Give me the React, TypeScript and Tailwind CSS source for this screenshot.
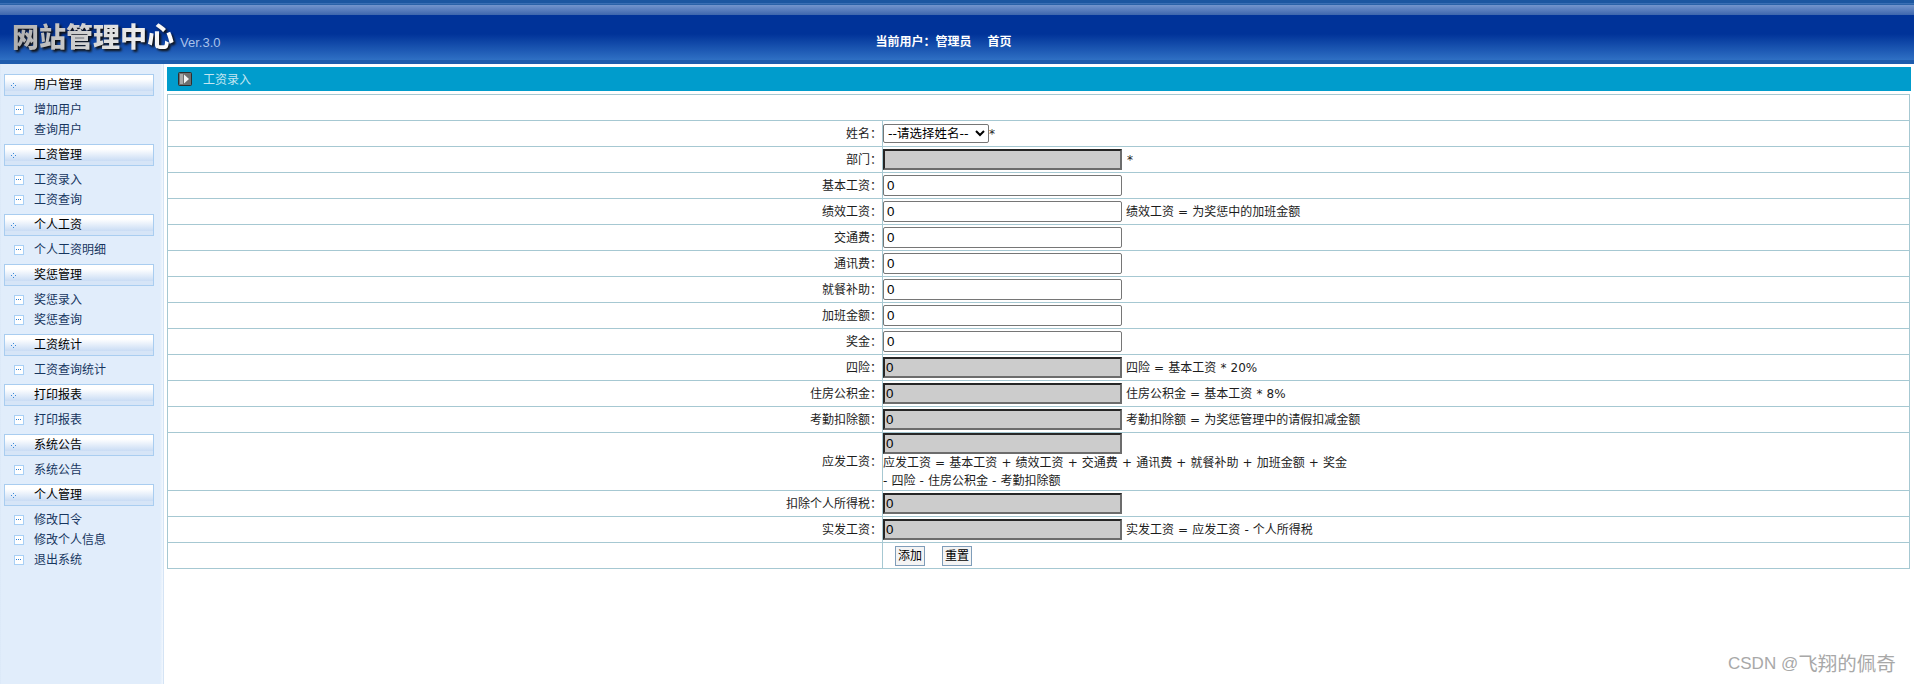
import React from "react";

const menu = [
  { title: "用户管理", items: ["增加用户", "查询用户"] },
  { title: "工资管理", items: ["工资录入", "工资查询"] },
  { title: "个人工资", items: ["个人工资明细"] },
  { title: "奖惩管理", items: ["奖惩录入", "奖惩查询"] },
  { title: "工资统计", items: ["工资查询统计"] },
  { title: "打印报表", items: ["打印报表"] },
  { title: "系统公告", items: ["系统公告"] },
  { title: "个人管理", items: ["修改口令", "修改个人信息", "退出系统"] },
];

type Row = { label: string; ro?: boolean; value?: string; help?: string };

const rows: Row[] = [
  { label: "基本工资：" },
  { label: "绩效工资：", help: "绩效工资 = 为奖惩中的加班金额" },
  { label: "交通费：" },
  { label: "通讯费：" },
  { label: "就餐补助：" },
  { label: "加班金额：" },
  { label: "奖金：" },
  { label: "四险：", ro: true, help: "四险 = 基本工资 * 20%" },
  { label: "住房公积金：", ro: true, help: "住房公积金 = 基本工资 * 8%" },
  { label: "考勤扣除额：", ro: true, help: "考勤扣除额 = 为奖惩管理中的请假扣减金额" },
];

function Field({ ro, value = "0" }: { ro?: boolean; value?: string }) {
  if (ro) {
    return (
      <input
        readOnly
        defaultValue={value}
        className="block w-[239px] h-[21px] shrink-0 border-2 border-t-[#262626] border-l-[#262626] border-b-[#6c6c6c] border-r-[#6c6c6c] bg-[#cccccc] px-px text-[13.33px] text-black [font-family:'Liberation_Sans',sans-serif]"
      />
    );
  }
  return (
    <input
      defaultValue={value}
      className="block w-[239px] h-[21px] shrink-0 rounded-[2px] border border-[#767676] bg-white px-[3px] text-[13.33px] text-black [font-family:'Liberation_Sans',sans-serif]"
    />
  );
}

function Label({ children }: { children?: React.ReactNode }) {
  return <td className="h-[26px] w-[715px] border border-[#a6c8d2] p-0 text-right align-middle">{children}</td>;
}

function Value({ children }: { children?: React.ReactNode }) {
  return <td className="h-[26px] border border-[#a6c8d2] p-0 align-middle [word-spacing:0.3px]">{children}</td>;
}

function ItemIcon() {
  return (
    <svg width="10" height="10" viewBox="0 0 10 10" className="shrink-0">
      <rect x="0.5" y="0.5" width="9" height="9" fill="#ffffff" stroke="#a9d0f5" />
      <rect x="2" y="4" width="1" height="1" fill="#2b7fd8" />
      <rect x="4" y="4" width="1" height="1" fill="#2b7fd8" />
      <rect x="6" y="4" width="1" height="1" fill="#2b7fd8" />
    </svg>
  );
}

function HeadIcon() {
  return (
    <svg width="5" height="5" viewBox="0 0 5 5" className="shrink-0">
      <rect x="2" y="0" width="1" height="1" fill="#3a8ad8" />
      <rect x="0" y="2" width="1" height="1" fill="#3a8ad8" />
      <rect x="4" y="2" width="1" height="1" fill="#3a8ad8" />
      <rect x="2" y="4" width="1" height="1" fill="#3a8ad8" />
    </svg>
  );
}

export default function App() {
  return (
    <div className="relative h-[684px] w-[1914px] overflow-hidden bg-white text-[12px] text-[#1c1c1c] [font-family:'DejaVu_Sans','Noto_Sans_CJK_SC',sans-serif]">
      <header className="flex h-[64px] items-start bg-[linear-gradient(to_bottom,#1c57a1_0px,#1c57a1_3px,#3a6fb5_3px,#3a6fb5_4px,#2a62a8_4px,#2a62a8_5px,#7395cd_5px,#3d66ad_15px,#003399_15px,#003399_34px,#2f70c4_60px,#1f5cad_60px,#1f5cad_64px)]">
        <div className="ml-[12px] mt-[20px] flex items-end">
          <span className="bg-linear-to-r from-[#aeaeae] to-white bg-clip-text text-[27px] font-black leading-[32px] text-transparent [filter:drop-shadow(2px_2px_1px_#101010)] [font-family:'Noto_Sans_CJK_SC',sans-serif]">
            网站管理中心
          </span>
          <span className="mb-[1px] ml-[6px] text-[13px] leading-[16px] text-[#a9c2ea] [font-family:'Liberation_Sans',sans-serif]">
            Ver.3.0
          </span>
        </div>
        <div className="ml-[655px] mt-[33px] flex text-[12px] font-bold leading-[16px] text-white [font-family:'Noto_Sans_CJK_SC',sans-serif]">
          <span>当前用户：</span>
          <span>管理员</span>
          <span className="ml-[16px]">首页</span>
        </div>
      </header>

      <div className="flex h-[620px]">
        <aside className="w-[164px] shrink-0 border-r border-[#d5e4f5] bg-[linear-gradient(to_right,#d8e6f6_0px,#e1edfb_1px,#e1edfb_160px,#f1f7fe_163px)] pl-[4px] pt-[10px] [font-family:'Noto_Sans_CJK_SC',sans-serif]">
          {menu.map((m) => (
            <div key={m.title}>
              <div className="flex h-[22px] w-[150px] items-center border border-[#a9cdf0] bg-[linear-gradient(to_bottom,#ffffff_0%,#ffffff_20%,#c9dcf4_80%,#d6e5f7_82%,#d6e5f7_100%)] pl-[6px] text-black">
                <HeadIcon />
                <span className="mb-[2px] ml-[18px]">{m.title}</span>
              </div>
              <ul className="py-[4px]">
                {m.items.map((it) => (
                  <li key={it} className="flex h-[20px] items-center pl-[10px] text-[#17365f]">
                    <ItemIcon />
                    <span className="mb-[2px] ml-[10px]">{it}</span>
                  </li>
                ))}
              </ul>
            </div>
          ))}
        </aside>

        <main className="ml-[3px] w-[1744px] shrink-0 pt-[3px]">
          <div className="flex h-[24px] items-center bg-[#009ccc] pl-[11px] text-[#c4e6f2] [font-family:'Noto_Sans_CJK_SC',sans-serif]">
            <svg width="14" height="14" viewBox="0 0 14 14" className="shrink-0">
              <rect x="0.5" y="0.5" width="13" height="13" rx="1" fill="#6f6f6f" stroke="#2e2e2e" />
              <rect x="2" y="2" width="3" height="10" fill="#a8a8a8" />
              <path d="M6 2.5 L11 7 L6 11.5 Z" fill="#f4f4f4" />
            </svg>
            <span className="ml-[11px]">工资录入</span>
          </div>
          <table className="mt-[3px] w-[1743px] border-collapse">
            <tbody>
              <tr>
                <td colSpan={2} className="h-[26px] border border-[#a6c8d2] p-0" />
              </tr>
              <tr>
                <Label>姓名：</Label>
                <Value>
                  <div className="flex items-center">
                    <select className="h-[19px] w-[106px] rounded-[2px] border border-[#767676] bg-white text-[12.5px] leading-none text-black">
                      <option>--请选择姓名--</option>
                    </select>
                    <span>*</span>
                  </div>
                </Value>
              </tr>
              <tr>
                <Label>部门：</Label>
                <Value>
                  <div className="flex items-center">
                    <Field ro value="" />
                    <span className="ml-[5px]">*</span>
                  </div>
                </Value>
              </tr>
              {rows.map((r) => (
                <tr key={r.label}>
                  <Label>{r.label}</Label>
                  <Value>
                    <div className="flex items-center gap-[4px]">
                      <Field ro={r.ro} />
                      {r.help && <span>{r.help}</span>}
                    </div>
                  </Value>
                </tr>
              ))}
              <tr>
                <Label>应发工资：</Label>
                <Value>
                  <Field ro />
                  <div className="h-[36px] leading-[18px]">
                    应发工资 = 基本工资 + 绩效工资 + 交通费 + 通讯费 + 就餐补助 + 加班金额 + 奖金
                    <br />- 四险 - 住房公积金 - 考勤扣除额
                  </div>
                </Value>
              </tr>
              <tr>
                <Label>扣除个人所得税：</Label>
                <Value>
                  <Field ro />
                </Value>
              </tr>
              <tr>
                <Label>实发工资：</Label>
                <Value>
                  <div className="flex items-center gap-[4px]">
                    <Field ro />
                    <span>实发工资 = 应发工资 - 个人所得税</span>
                  </div>
                </Value>
              </tr>
              <tr>
                <Label />
                <Value>
                  <div className="flex items-center gap-[17px] pl-[12px]">
                    <button className="h-[20px] w-[30px] border border-[#7f9db9] bg-[#f4f4f4] text-black">添加</button>
                    <button className="h-[20px] w-[30px] border border-[#7f9db9] bg-[#f4f4f4] text-black">重置</button>
                  </div>
                </Value>
              </tr>
            </tbody>
          </table>
        </main>
      </div>

      <div className="absolute left-[1728px] top-[652px] flex items-center whitespace-nowrap text-[17px] leading-[24px] text-[#a8a8a8] [font-family:'Liberation_Sans','Noto_Sans_CJK_SC',sans-serif]">
        CSDN @<span className="text-[19.5px]">飞翔的佩奇</span>
      </div>
    </div>
  );
}
